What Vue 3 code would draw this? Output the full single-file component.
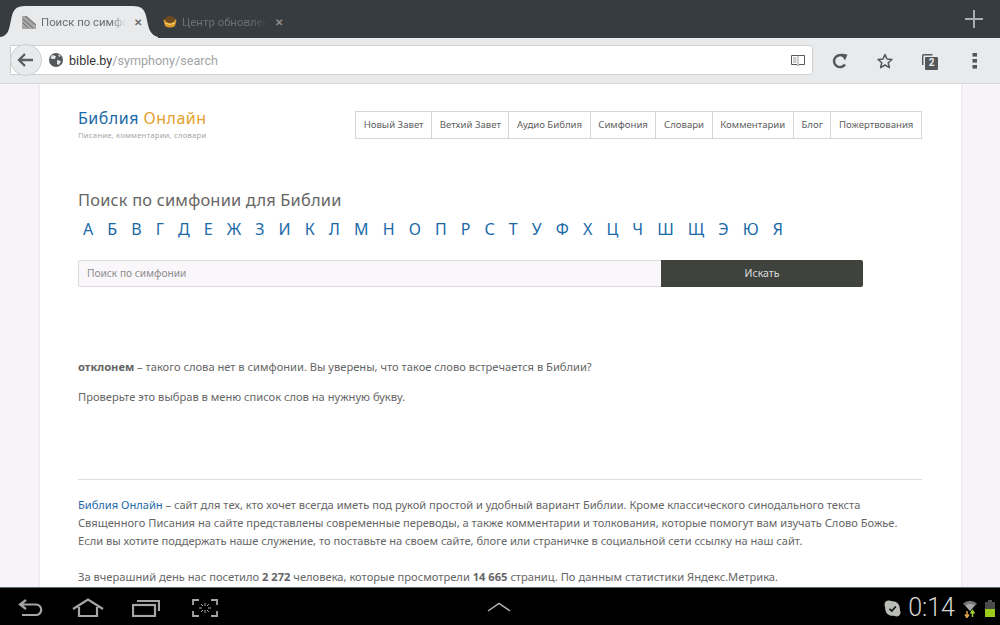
<template>
  <div class="screen">
    <div class="tabstrip">
      <div class="tab active">
        <svg class="tab-shape" width="158" height="38" viewBox="0 0 158 38">
          <path d="M0 37 C8 36 9 30 11 20 C13 10 15 6 26 6 L132 6 C143 6 145 10 147 20 C149 30 150 36 162 38 L0 38 Z" fill="#e9eaec" />
        </svg>
        <svg class="favicon" width="14" height="14" viewBox="0 0 14 14">
          <path d="M0 1 L5 1 L14 9 L14 14 L0 14 Z" fill="#a9a7a5" />
          <path d="M3 1 L14 10 M1 4 L11 13 M1 8 L6 13" stroke="#6d6b69" stroke-width="1" fill="none" />
        </svg>
        <span class="tab-title">Поиск по симфо</span>
        <span class="tab-close">✕</span>
      </div>
      <div class="tab inactive">
        <svg class="favicon" width="14" height="14" viewBox="0 0 14 14">
          <path d="M0.5 5 Q7 1 13.5 5 L12 11 Q7 14 2 11 Z" fill="#dc9a2a" />
          <ellipse cx="7" cy="4.5" rx="5" ry="3.5" fill="#6b4a22" />
          <path d="M2 8 Q7 11 12 8" stroke="#f3d27a" fill="none" />
        </svg>
        <span class="tab-title">Центр обновлен</span>
        <span class="tab-close">✕</span>
      </div>
      <svg class="new-tab" width="20" height="20" viewBox="0 0 20 20">
        <path d="M10 1 V19 M1 10 H19" stroke="#a9adaf" stroke-width="2" />
      </svg>
    </div>

    <div class="toolbar">
      <div class="omnibox">
        <div class="back">
          <svg width="18" height="16" viewBox="0 0 18 16">
            <path d="M8 2 L2 8 L8 14 M2 8 H16" stroke="#5c5f62" stroke-width="2.4" fill="none" />
          </svg>
        </div>
        <svg class="globe" width="14" height="14" viewBox="0 0 14 14">
          <circle cx="7" cy="7" r="7" fill="#54575a" />
          <path d="M3 2 L7 3 L6 6 L3 6 L1.5 5 Z M8 7 L12 8 L10 12 L8 11 Z M9 1 L12 3 L10 4 Z" fill="#e4e5e6" />
        </svg>
        <span class="url"><span class="host">bible.by</span>/symphony/search</span>
        <svg class="reader" width="14" height="12" viewBox="0 0 14 12">
          <path d="M0.5 1.5 H13.5 V10.5 H8 L7 11.5 L6 10.5 H0.5 Z" fill="none" stroke="#55585b" stroke-width="1" />
          <path d="M7 1.5 V10.5 M2 4 H5.5 M2 6 H5.5 M2 8 H5.5" stroke="#9a9c9e" stroke-width="1" />
        </svg>
      </div>
      <div class="tools">
        <svg width="16" height="16" viewBox="0 0 16 16">
          <path d="M13 11.5 A6 6 0 1 1 11.5 3.2" stroke="#54575a" stroke-width="2.4" fill="none" />
          <path d="M8.5 0.5 L15.5 1.5 L13 7.5 Z" fill="#54575a" />
        </svg>
        <svg width="16" height="16" viewBox="0 0 16 16">
          <path d="M8 1.5 L10 6 L15 6.4 L11.2 9.7 L12.4 14.6 L8 12 L3.6 14.6 L4.8 9.7 L1 6.4 L6 6 Z" fill="none" stroke="#54575a" stroke-width="1.5" stroke-linejoin="round" />
        </svg>
        <div class="tabs-count">
          <svg width="16" height="16" viewBox="0 0 16 16">
            <path d="M10.5 0.7 H1.5 A0.8 0.8 0 0 0 0.7 1.5 V11" stroke="#54575a" stroke-width="1.4" fill="none" />
            <rect x="3" y="3" width="13" height="13" rx="1" fill="#54575a" />
          </svg>
          <span>2</span>
        </div>
        <svg class="dots" width="6" height="16" viewBox="0 0 6 16">
          <rect x="0.5" y="0" width="4.5" height="3.6" fill="#54575a" />
          <rect x="0.5" y="6" width="4.5" height="3.6" fill="#54575a" />
          <rect x="0.5" y="12" width="4.5" height="3.6" fill="#54575a" />
        </svg>
      </div>
    </div>

    <div class="viewport">
      <div class="page">
        <header class="head">
          <div class="logo">
            <div class="logo-name"><span class="blue">Библия</span> <span class="orange">Онлайн</span></div>
            <div class="logo-sub">Писание, комментарии, словари</div>
          </div>
          <nav class="menu">
            <a v-for="item in menu" :key="item">{{ item }}</a>
          </nav>
        </header>

        <h1>Поиск по симфонии для Библии</h1>
        <div class="letters">
          <a v-for="l in letters" :key="l">{{ l }}</a>
        </div>

        <div class="search">
          <div class="search-input">Поиск по симфонии</div>
          <div class="search-btn">Искать</div>
        </div>

        <p class="notice"><b>отклонем</b> – такого слова нет в симфонии. Вы уверены, что такое слово встречается в Библии?</p>
        <p class="notice second">Проверьте это выбрав в меню список слов на нужную букву.</p>

        <hr />

        <p class="about">
          <a class="blue">Библия Онлайн</a> – сайт для тех, кто хочет всегда иметь под рукой простой и удобный вариант Библии. Кроме классического синодального текста<br />
          Священного Писания на сайте представлены современные переводы, а также комментарии и толкования, которые помогут вам изучать Слово Божье.<br />
          Если вы хотите поддержать наше служение, то поставьте на своем сайте, блоге или страничке в социальной сети ссылку на наш сайт.
        </p>
        <p class="about stats">За вчерашний день нас посетило <b>2 272</b> человека, которые просмотрели <b>14 665</b> страниц. По данным статистики Яндекс.Метрика.</p>
      </div>
    </div>

    <div class="navbar">
      <div class="nav-left">
        <svg width="26" height="18" viewBox="0 0 26 18">
          <path d="M8 1 L2 5.5 L8 10 M2 5.5 H18 A5 5 0 0 1 18 16 H4" stroke="#a6a6a6" stroke-width="2.2" fill="none" />
        </svg>
        <svg width="32" height="19" viewBox="0 0 32 19">
          <path d="M1 11 L16 1.5 L31 11 M7 9 V18 H25 V9" stroke="#a6a6a6" stroke-width="2.2" fill="none" />
        </svg>
        <svg width="28" height="18" viewBox="0 0 28 18">
          <rect x="1" y="6" width="22" height="11" stroke="#a6a6a6" stroke-width="2.2" fill="none" />
          <path d="M5 2 H27 V12" stroke="#a6a6a6" stroke-width="2.2" fill="none" />
        </svg>
        <svg class="capture" width="26" height="18" viewBox="0 0 26 18">
          <path d="M1 6 V1 H7 M19 1 H25 V6 M1 12 V17 H7 M19 17 H25 V12" stroke="#a6a6a6" stroke-width="1.8" fill="none" />
          <path d="M13 4 V7 M13 11 V14 M7 9 H10 M16 9 H19 M9 5 L11 7 M17 5 L15 7 M9 13 L11 11 M17 13 L15 11" stroke="#a6a6a6" stroke-width="1" />
        </svg>
      </div>
      <svg class="nav-up" width="24" height="10" viewBox="0 0 24 10">
        <path d="M1 9 L12 1.5 L23 9" stroke="#b5b5b5" stroke-width="1.5" fill="none" />
      </svg>
      <div class="status">
        <svg width="17" height="17" viewBox="0 0 17 17">
          <path d="M4.5 0.5 C6 0.5 6.5 1.2 8.5 1.2 C13 1.2 15.8 4.5 15.8 8.5 C15.8 10.5 16.5 11 16.5 12.5 C16.5 15 14.5 16.5 12.5 16.5 C11 16.5 10.5 15.8 8.5 15.8 C4 15.8 1.2 12.5 1.2 8.5 C1.2 6.5 0.5 6 0.5 4.5 C0.5 2 2.5 0.5 4.5 0.5 Z" fill="#b9bdb6" />
          <path d="M5.5 8.8 L7.8 11 L11.8 6.5" stroke="#111" stroke-width="1.7" fill="none" />
        </svg>
        <span class="clock">0:14</span>
        <svg width="16" height="19" viewBox="0 0 16 19">
          <path d="M1 4.5 Q8 -1 15 4.5 L8 12 Z" fill="#777" />
          <path d="M3.5 6.5 Q8 3 12.5 6.5 L8 12 Z" fill="#a8a8a8" />
          <path d="M5 12 V18 M3 15.5 L5 18.5 L7 15.5" stroke="#e5a14a" stroke-width="1.5" fill="none" />
          <path d="M10.5 18 V12 M8.5 14.5 L10.5 11.5 L12.5 14.5" stroke="#a4cf3c" stroke-width="1.5" fill="none" />
        </svg>
        <svg width="10" height="17" viewBox="0 0 10 17">
          <rect x="3" y="0" width="4" height="2" fill="#555" />
          <rect x="0" y="2" width="10" height="7" fill="#4a4a4a" />
          <rect x="0" y="9" width="10" height="8" fill="#9ccb1c" />
        </svg>
      </div>
    </div>
  </div>
</template>

<script setup>
const menu = ['Новый Завет', 'Ветхий Завет', 'Аудио Библия', 'Симфония', 'Словари', 'Комментарии', 'Блог', 'Пожертвования']
const letters = 'А Б В Г Д Е Ж З И К Л М Н О П Р С Т У Ф Х Ц Ч Ш Щ Э Ю Я'.split(' ')
</script>

<style>
html, body { margin: 0; padding: 0; }
</style>

<style scoped>
.screen {
  width: 1000px;
  height: 625px;
  display: flex;
  flex-direction: column;
  overflow: hidden;
  font-family: "Noto Sans", "Open Sans", sans-serif;
  color: #606060;
}

/* browser chrome */
.tabstrip {
  height: 38px;
  flex: none;
  background: #373c40;
  display: flex;
  align-items: center;
  padding-left: 11px;
  font-family: Roboto, sans-serif;
  position: relative;
}
.tab {
  width: 141px;
  height: 38px;
  display: flex;
  align-items: center;
  gap: 5px;
  padding: 6px 0 0 11px;
  box-sizing: border-box;
  position: relative;
  font-size: 11.4px;
}
.tab-shape { position: absolute; left: -11px; top: 0; }
.favicon, .tab-title, .tab-close { position: relative; }
.tab-title {
  width: 87px;
  margin-right: 1px;
  white-space: nowrap;
  overflow: hidden;
  -webkit-mask-image: linear-gradient(to right, #000 80%, transparent 98%);
  mask-image: linear-gradient(to right, #000 80%, transparent 98%);
}
.tab-close { font-size: 10px; font-weight: bold; }
.active .tab-title { color: #6a6d70; }
.active .tab-close { color: #6a6d70; }
.inactive .tab-title { color: #6d7073; }
.inactive .tab-close { color: #8b8e90; }
.new-tab { position: absolute; right: 16px; top: 9px; }

.toolbar {
  height: 46px;
  flex: none;
  box-sizing: border-box;
  background: #e9eaec;
  border-bottom: 1px solid #d5d6d8;
  display: flex;
  align-items: center;
  padding-left: 10px;
}
.omnibox {
  width: 803px;
  height: 30px;
  box-sizing: border-box;
  background: #fff;
  border: 1px solid #ccced0;
  border-radius: 0 3px 3px 0;
  display: flex;
  align-items: center;
  position: relative;
  padding-left: 38px;
  margin-top: -1px;
}
.back {
  position: absolute;
  left: -1px;
  top: -2px;
  width: 32px;
  height: 32px;
  box-sizing: border-box;
  border: 1px solid #ccced0;
  border-radius: 50%;
  background: #e9eaec;
  display: flex;
  align-items: center;
  justify-content: center;
}
.url {
  margin-left: 6px;
  font-family: Roboto, sans-serif;
  font-size: 12.6px;
  color: #a2a4a6;
  flex: 1;
}
.host { color: #333; }
.reader { margin-right: 7px; }
.tools {
  display: flex;
  align-items: center;
  margin-left: 19px;
  gap: 29px;
}
.dots { margin-left: 5px; }
.tabs-count { position: relative; width: 16px; height: 16px; }
.tabs-count span {
  position: absolute;
  left: 3px;
  top: 3px;
  width: 13px;
  text-align: center;
  color: #e9eaec;
  font: bold 10px/13px Roboto, sans-serif;
}

/* page */
.viewport {
  flex: 1;
  min-height: 0;
  overflow: hidden;
  background: #f8f2f9;
  display: flex;
}
.page {
  width: 921px;
  margin-left: 40px;
  box-sizing: border-box;
  background: #fff;
  box-shadow: 0 0 2px #d8d4da;
  padding: 27px 39px 0 38px;
  flex: none;
}
.head {
  display: flex;
  justify-content: space-between;
  align-items: flex-start;
}
.logo { margin-top: -1px; }
.logo-name {
  font-size: 16px;
  line-height: 17px;
  letter-spacing: 0.5px;
}
.blue { color: #1a6aa8; }
.orange { color: #e6a02f; }
.logo-sub {
  font-size: 7.7px;
  line-height: 11px;
  margin-top: 3px;
  color: #a5a5a5;
  letter-spacing: 0.2px;
}
.menu {
  display: flex;
  border: 1px solid #d6d6d6;
  height: 28px;
  box-sizing: border-box;
}
.menu a {
  padding: 0 7.6px;
  font-size: 9.6px;
  line-height: 26px;
  color: #606060;
  border-left: 1px solid #d6d6d6;
  white-space: nowrap;
}
.menu a:first-child { border-left: 0; }

h1 {
  margin: 48px 0 0;
  font-size: 16.4px;
  line-height: 22px;
  font-weight: 400;
  color: #666;
  letter-spacing: 0.2px;
}
.letters {
  display: flex;
  margin: 8px 0 0 5px;
  gap: 14.08px;
}
.letters a {
  font-size: 16px;
  line-height: 20px;
  color: #1a6aa8;
}
.search {
  display: flex;
  width: 785px;
  height: 27px;
  margin-top: 21px;
}
.search-input {
  flex: 1;
  box-sizing: border-box;
  border: 1px solid #dcdadc;
  border-right: 0;
  border-radius: 2px 0 0 2px;
  background: #f9f7fa;
  padding-left: 8px;
  font-size: 10.2px;
  line-height: 25px;
  color: #8c8c8c;
}
.search-btn {
  width: 202px;
  background: #3f423d;
  border-radius: 0 2px 2px 0;
  text-align: center;
  color: #ddd;
  font-size: 10.5px;
  line-height: 27px;
}
p { margin: 0; }
.notice {
  font-size: 11.13px;
  line-height: 18px;
  color: #666;
  margin-top: 71px;
}
.notice.second { margin-top: 12px; }
hr {
  border: 0;
  border-top: 1px solid #ddd;
  margin: 73px 0 0;
}
.about {
  font-size: 11.1px;
  line-height: 18px;
  color: #666;
  margin-top: 16px;
  white-space: nowrap;
}
.about.stats { margin-top: 18px; font-size: 11.15px; }

/* android bar */
.navbar {
  height: 38px;
  flex: none;
  box-sizing: border-box;
  background: #000;
  border-top: 1px solid #5d6a70;
  position: relative;
  display: flex;
  align-items: center;
  padding-left: 18px;
}
.nav-left {
  display: flex;
  align-items: center;
  gap: 28px;
  margin-top: 2px;
}
.capture { margin-left: 4px; }
.nav-up { position: absolute; left: 487px; top: 14px; }
.status {
  position: absolute;
  right: 5px;
  top: 10px;
  display: flex;
  align-items: center;
  gap: 7px;
}
.clock {
  font-family: Roboto, sans-serif;
  font-weight: 300;
  font-size: 25px;
  line-height: 20px;
  color: #d8d8d8;
}
</style>
